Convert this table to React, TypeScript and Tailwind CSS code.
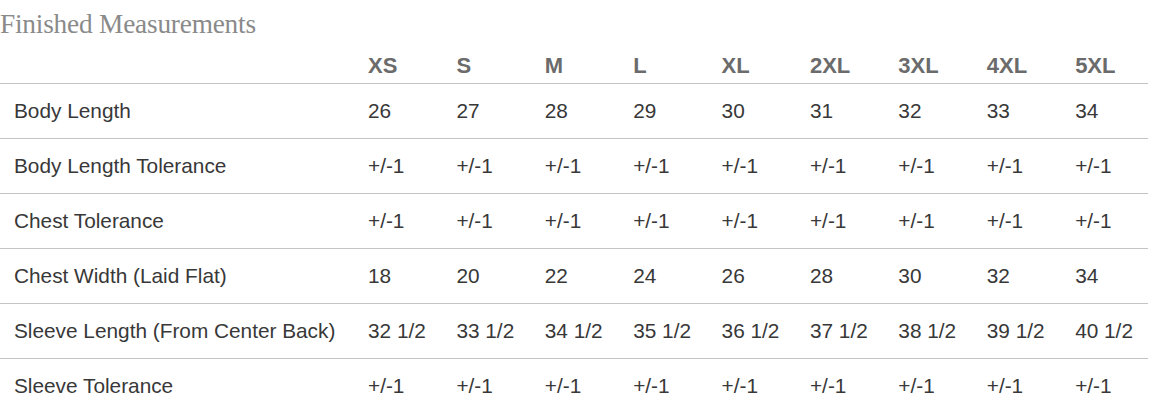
import React from 'react';

const SIZES = ['XS', 'S', 'M', 'L', 'XL', '2XL', '3XL', '4XL', '5XL'];

const ROWS: { label: string; values: string[] }[] = [
  { label: 'Body Length', values: ['26', '27', '28', '29', '30', '31', '32', '33', '34'] },
  { label: 'Body Length Tolerance', values: Array(9).fill('+/-1') },
  { label: 'Chest Tolerance', values: Array(9).fill('+/-1') },
  { label: 'Chest Width (Laid Flat)', values: ['18', '20', '22', '24', '26', '28', '30', '32', '34'] },
  {
    label: 'Sleeve Length (From Center Back)',
    values: ['32 1/2', '33 1/2', '34 1/2', '35 1/2', '36 1/2', '37 1/2', '38 1/2', '39 1/2', '40 1/2'],
  },
  { label: 'Sleeve Tolerance', values: Array(9).fill('+/-1') },
];

export default function App() {
  return (
    <div className="w-[1151px] h-[410px] bg-white overflow-hidden font-['Liberation_Sans',Arial,sans-serif]">
      <h2 className="pt-[9px] h-[39px] text-[27.3px] leading-[30px] text-[#8a8a8a] font-['Liberation_Serif','Times_New_Roman',serif] tracking-[-0.2px]">
        Finished Measurements
      </h2>
      <table className="w-[1148px] border-collapse table-fixed">
        <colgroup>
          <col className="w-[368px]" />
          {SIZES.slice(0, 8).map((s) => (
            <col key={s} className="w-[88.4px]" />
          ))}
          <col />
        </colgroup>
        <thead>
          <tr className="h-[44px]">
            <th />
            {SIZES.map((s) => (
              <th
                key={s}
                className="text-left align-bottom pb-[4px] text-[22px] leading-[26px] font-bold text-[#6b6b6b]"
              >
                {s}
              </th>
            ))}
          </tr>
        </thead>
        <tbody>
          {ROWS.map((row) => (
            <tr key={row.label} className="h-[55px] border-t border-[#c4c4c4]">
              <td className="pl-[14px] text-[20.8px] leading-[23px] text-[#383838] whitespace-nowrap">{row.label}</td>
              {row.values.map((v, i) => (
                <td key={i} className="text-[20.8px] leading-[23px] text-[#383838] whitespace-nowrap">
                  {v}
                </td>
              ))}
            </tr>
          ))}
        </tbody>
      </table>
    </div>
  );
}
